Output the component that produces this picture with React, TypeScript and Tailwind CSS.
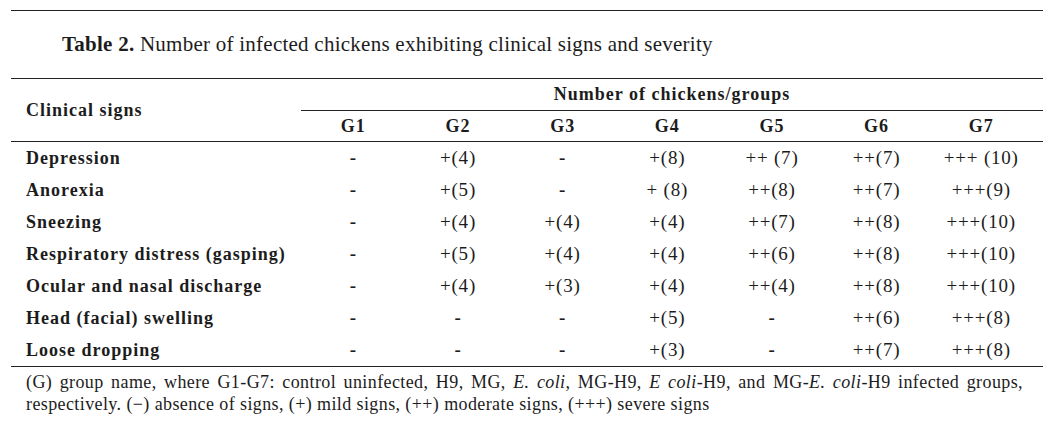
const rows: { sign: string; values: string[] }[] = [
  { sign: "Depression", values: ["-", "+(4)", "-", "+(8)", "++ (7)", "++(7)", "+++ (10)"] },
  { sign: "Anorexia", values: ["-", "+(5)", "-", "+ (8)", "++(8)", "++(7)", "+++(9)"] },
  { sign: "Sneezing", values: ["-", "+(4)", "+(4)", "+(4)", "++(7)", "++(8)", "+++(10)"] },
  { sign: "Respiratory distress (gasping)", values: ["-", "+(5)", "+(4)", "+(4)", "++(6)", "++(8)", "+++(10)"] },
  { sign: "Ocular and nasal discharge", values: ["-", "+(4)", "+(3)", "+(4)", "++(4)", "++(8)", "+++(10)"] },
  { sign: "Head (facial) swelling", values: ["-", "-", "-", "+(5)", "-", "++(6)", "+++(8)"] },
  { sign: "Loose dropping", values: ["-", "-", "-", "+(3)", "-", "++(7)", "+++(8)"] },
];

const groups = ["G1", "G2", "G3", "G4", "G5", "G6", "G7"];

const App = () => {
  return (
    <div className="bg-white w-[1052px] h-[445px] pt-[10px] pl-[11px] font-['Liberation_Serif',serif] text-[#1c1c1c]">
      <div className="w-[1032px] border-t border-[#222]">
        <div className="h-[68px] flex items-center pl-[51px] text-[21px] tracking-[0.25px] border-b border-[#222]">
          <span>
            <b>Table 2.</b> Number of infected chickens exhibiting clinical signs and severity
          </span>
        </div>

        <div className="grid grid-cols-[290px_1fr] h-[63px] border-b border-[#222] font-bold text-[18px] tracking-[1px]">
          <div className="flex items-center pl-[15px]">Clinical signs</div>
          <div className="flex flex-col">
            <div className="h-[32px] flex items-center justify-center border-b border-[#222]">
              Number of chickens/groups
            </div>
            <div className="h-[30px] grid grid-cols-[repeat(7,104.67px)_1fr] items-center">
              {groups.map((g) => (
                <div key={g} className="text-center">
                  {g}
                </div>
              ))}
              <div />
            </div>
          </div>
        </div>

        <div className="border-b border-[#222]">
          {rows.map((row) => (
            <div key={row.sign} className="h-[32px] grid grid-cols-[290px_repeat(7,104.67px)_1fr] items-center pt-[1px]">
              <div className="pl-[15px] font-bold text-[18px] tracking-[1px]">{row.sign}</div>
              {row.values.map((v, i) => (
                <div key={i} className="text-center text-[19px] tracking-[0.8px]">
                  {v === "-" ? <span className="font-bold">-</span> : v}
                </div>
              ))}
              <div />
            </div>
          ))}
        </div>

        <p className="pt-[4px] pl-[15px] w-[1012px] text-[18px] leading-[22px] tracking-[0.4px] text-justify">
          (G) group name, where G1-G7: control uninfected, H9, MG, <i>E. coli</i>, MG-H9, <i>E coli</i>-H9, and MG-<i>E. coli</i>-H9 infected groups, respectively. (−) absence of signs, (+) mild signs, (++) moderate signs, (+++) severe signs
        </p>
      </div>
    </div>
  );
};

export default App;
